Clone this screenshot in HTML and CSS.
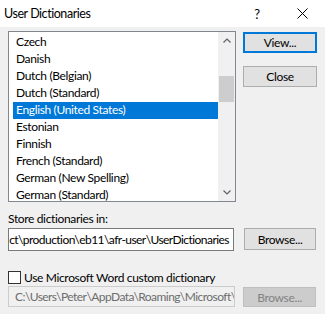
FILE: index.html
```html
<!DOCTYPE html>
<html>
<head>
<meta charset="utf-8">
<link rel="stylesheet" href="styles.css">
</head>
<body>
<div class="dialog">
  <div class="titlebar">
    <span class="title">User Dictionaries</span>
    <span class="help">?</span>
    <span class="close-x"><svg width="11" height="11" viewBox="0 0 11 11"><path d="M0.5 0.5L10.5 10.5M10.5 0.5L0.5 10.5" stroke="#000" stroke-width="1" fill="none"/></svg></span>
  </div>
  <div class="content">
    <div class="top">
      <div class="listbox">
        <ul class="items">
          <li>Czech</li>
          <li>Danish</li>
          <li>Dutch (Belgian)</li>
          <li>Dutch (Standard)</li>
          <li class="selected">English (United States)</li>
          <li>Estonian</li>
          <li>Finnish</li>
          <li>French (Standard)</li>
          <li>German (New Spelling)</li>
          <li>German (Standard)</li>
        </ul>
        <div class="scrollbar">
          <div class="arrow"><svg width="8" height="5" viewBox="0 0 8 5"><path d="M0.5 4.5L4 1L7.5 4.5" stroke="#606060" stroke-width="1.2" fill="none"/></svg></div>
          <div class="track"><div class="thumb"></div></div>
          <div class="arrow"><svg width="8" height="5" viewBox="0 0 8 5"><path d="M0.5 0.5L4 4L7.5 0.5" stroke="#606060" stroke-width="1.2" fill="none"/></svg></div>
        </div>
      </div>
      <div class="buttons">
        <button class="btn btn-default">View...</button>
        <button class="btn btn-close">Close</button>
      </div>
    </div>
    <div class="label">Store dictionaries in:</div>
    <div class="row">
      <div class="path"><span>ct\production\eb11\afr-user\UserDictionaries</span></div>
      <button class="btn btn-browse">Browse...</button>
    </div>
    <div class="check"><span class="box"></span><span>Use Microsoft Word custom dictionary</span></div>
    <div class="row row-disabled">
      <div class="path path-disabled"><span>C:\Users\Peter\AppData\Roaming\Microsoft\C</span></div>
      <button class="btn btn-disabled">Browse...</button>
    </div>
  </div>
</div>
</body>
</html>
```
FILE: styles.css
```css
html, body {
  margin: 0;
  padding: 0;
}
body {
  font-family: "Lato", "Noto Sans", sans-serif;
  font-size: 12px;
  letter-spacing: -0.35px;
  color: #000;
}
.dialog {
  width: 325px;
  height: 314px;
  background: #f0f0f0;
  overflow: hidden;
}
.titlebar {
  height: 27px;
  background: #fff;
  display: flex;
  align-items: center;
}
.title {
  margin-left: 4px;
  font-size: 12.5px;
  letter-spacing: -0.45px;
  flex: 1;
}
.help {
  width: 12px;
  text-align: center;
  font-size: 13px;
  margin-right: 34px;
}
.close-x {
  display: flex;
  margin-right: 17px;
}
.content {
  padding: 4px 0 0 8px;
}
.top {
  display: flex;
  gap: 7px;
}
.listbox {
  width: 226px;
  height: 169px;
  border: 1px solid #828790;
  background: #fff;
  display: flex;
  overflow: hidden;
}
.items {
  list-style: none;
  margin: 0;
  padding: 2px 0 0 4px;
  flex: 1;
}
.items li {
  height: 17px;
  line-height: 16px;
  padding-left: 3px;
  white-space: nowrap;
}
.items li.selected {
  background: #0078d7;
  color: #fff;
}
.scrollbar {
  width: 17px;
  display: flex;
  flex-direction: column;
  background: #f0f0f0;
}
.arrow {
  height: 17px;
  display: flex;
  align-items: center;
  justify-content: center;
}
.track {
  flex: 1;
  padding: 27px 1px 0 1px;
}
.thumb {
  height: 26px;
  background: #cdcdcd;
}
.buttons {
  display: flex;
  flex-direction: column;
  width: 74px;
}
.btn {
  font-family: inherit;
  font-size: 12px;
  letter-spacing: inherit;
  color: #000;
  background: #e1e1e1;
  border: 1px solid #adadad;
  padding: 0;
  margin: 0;
  box-sizing: border-box;
  white-space: nowrap;
}
.btn-default {
  margin-top: 1px;
  height: 21px;
  border: 2px solid #0078d7;
}
.btn-close {
  margin-top: 13px;
  height: 21px;
}
.label {
  margin-top: 9px;
  line-height: 16px;
  height: 16px;
}
.row {
  display: flex;
  gap: 10px;
  margin-top: 1px;
  align-items: flex-start;
}
.path {
  width: 226px;
  height: 23px;
  box-sizing: border-box;
  border: 1px solid #7a7a7a;
  background: #fff;
  display: flex;
  justify-content: flex-end;
  align-items: center;
  padding-right: 4px;
  overflow: hidden;
  white-space: nowrap;
  letter-spacing: -0.55px;
}
.btn-browse {
  width: 72px;
  height: 22px;
}
.check {
  display: flex;
  align-items: center;
  margin-top: 18px;
  height: 16px;
  gap: 3px;
}
.box {
  width: 13px;
  height: 13px;
  box-sizing: border-box;
  border: 1px solid #333;
  background: #fff;
}
.row-disabled {
  margin-top: 1px;
  gap: 8px;
}
.path-disabled {
  width: 227px;
  height: 21px;
  border-color: #ccc;
  background: #f0f0f0;
  color: #6d6d6d;
  justify-content: flex-start;
  padding: 0 0 0 6px;
}
.btn-disabled {
  width: 73px;
  height: 20px;
  margin-top: 1px;
  background: #cccccc;
  border-color: #bfbfbf;
  color: #838383;
}
```
